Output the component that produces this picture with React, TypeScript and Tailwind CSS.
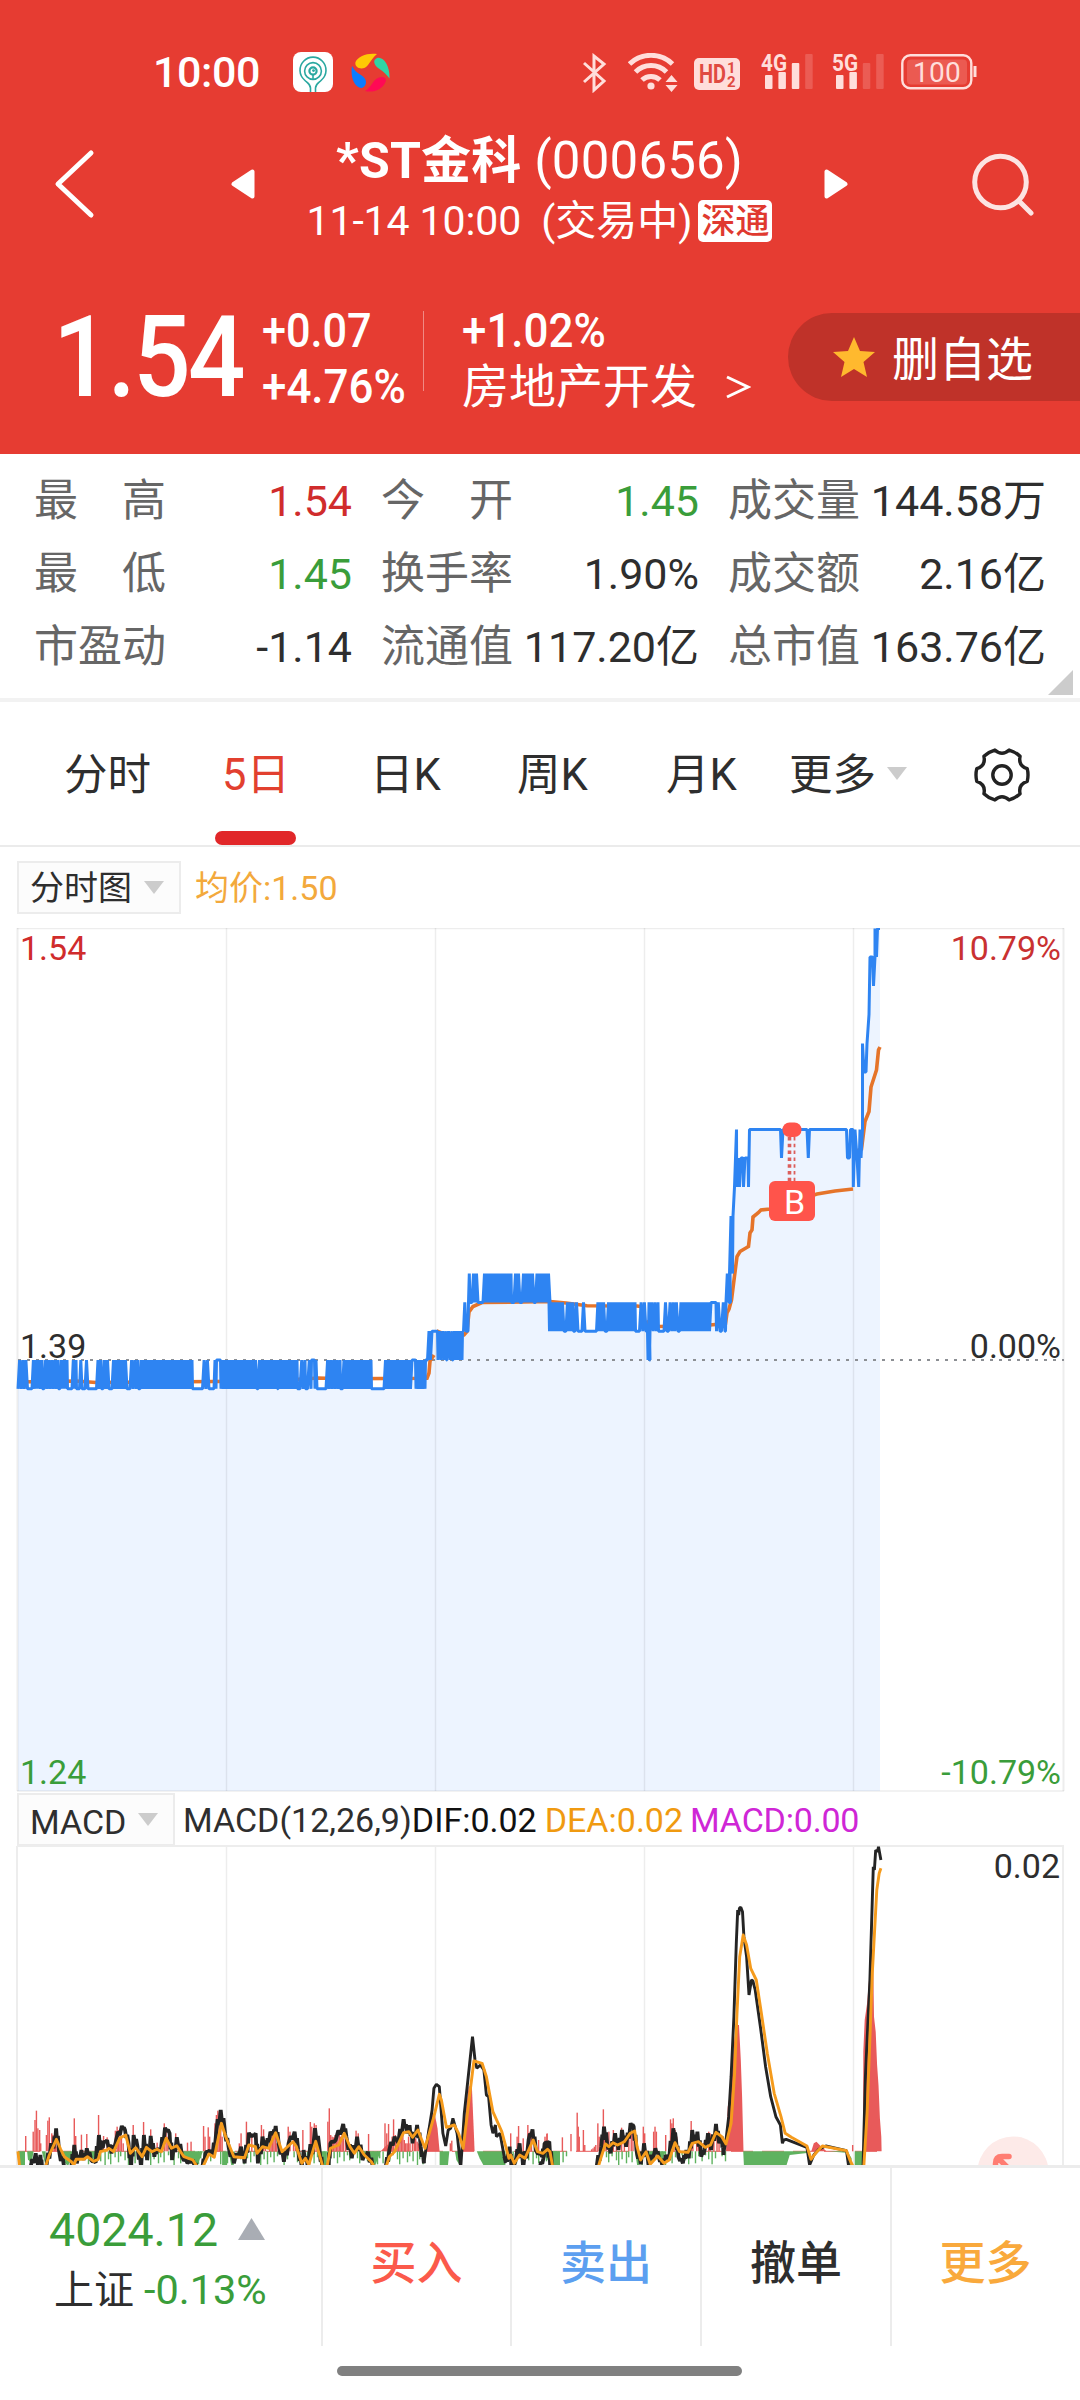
import type { ReactNode } from "react";
import clsx from "clsx";

const VIEW_FONT = "font-['Roboto','Noto_Sans_CJK_SC',sans-serif]";

/* ---------- chart data ---------- */

const STEP = 28.8;
const BASE = 1360;
const level = (cents: number) => BASE - cents * STEP;

// [from, to, low, high] runs where the price flips every tick, low/high in cents from 1.39
const FLIPS: number[][] = [
  [18, 27.5, -1, 0], [32, 42, -1, 0], [44, 58, -1, 0], [60, 67, -1, 0], [72, 76, -1, 0],
  [79.5, 82, -1, 0], [85, 88, -1, 0], [96.5, 101, -1, 0], [103, 109, -1, 0], [112, 127, -1, 0],
  [130, 138, -1, 0], [140, 192, -1, 0], [202.5, 209, -1, 0], [214, 216, -1, 0], [221, 257, -1, 0],
  [258, 277, -1, 0], [278, 297, -1, 0], [300, 305, -1, 0], [307.5, 311, -1, 0], [315, 317, -1, 0],
  [326, 340, -1, 0], [342.5, 371, -1, 0], [384, 412, -1, 0], [416, 425, -1, 0],
  [427.5, 432, 0, 1], [438, 446, 0, 1], [447, 452, 0, 1], [453, 462, 0, 1],
  [463.5, 466, 1, 2], [468.5, 470, 2, 3], [472, 478, 2, 3], [483, 511, 2, 3], [514, 520, 2, 3],
  [522, 534, 2, 3], [535.5, 550, 2, 3],
  [549.5, 564, 1, 2], [566, 573, 1, 2], [575, 578, 1, 2], [582, 585, 1, 2], [596.5, 605, 1, 2],
  [607, 635, 1, 2], [639.5, 646, 1, 2], [648, 650, 0, 2], [650, 658, 1, 2], [664, 667, 1, 2],
  [668.5, 678, 1, 2], [679.5, 711, 1, 2], [716.5, 720, 1, 2], [721.5, 725, 1, 2],
  [726, 730, 2, 3], [729.5, 732.5, 3, 5],
];

const RISE = [
  [733, 1216], [734.5, 1187], [736.5, 1129.5], [736.7, 1187], [738, 1158], [739.5, 1187],
  [741, 1158], [743, 1158], [743.5, 1187], [745, 1158], [748, 1158], [748.5, 1187], [749.5, 1129.5],
  [780.5, 1129.5], [781.5, 1158], [783, 1129.5], [807, 1129.5], [808.3, 1158], [809.5, 1129.5],
  [846.5, 1129.5], [847.5, 1158], [849.5, 1158], [850.5, 1129.5], [853, 1129.5], [853.3, 1187],
  [855, 1129.5], [857, 1158], [858.7, 1187], [860, 1129.5], [861, 1158], [862.5, 1129.5],
  [862.5, 1043.5], [864, 1072], [866, 1072], [867, 1043.5], [869, 1014.5], [870, 957],
  [872.5, 957], [873.5, 986], [875, 957], [875, 928.5], [876.5, 957], [877.5, 928.5], [880, 928.5],
];

function pricePoints() {
  const pts: number[][] = [];
  FLIPS.forEach(([from, to, low, high], i) => {
    const ticks = Math.max(2, Math.round((to - from) / 1.5));
    for (let t = 0; t <= ticks; t++) {
      const x = from + ((to - from) * t) / ticks;
      pts.push([x, level(t % 2 ? high : low)]);
    }
    const next = FLIPS[i + 1];
    if (!next) return;
    // a few quiet minutes hold the upper price instead of the lower one
    const hold = [13, 18, 22, 23, 24, 27, 46].includes(i) ? high : low;
    pts.push([to + 0.5, level(hold)], [next[0] - 0.5, level(hold)]);
  });
  return pts.concat(RISE);
}

const toLine = (pts: number[][]) =>
  pts.map(([x, y], i) => `${i ? "L" : "M"}${x.toFixed(1)} ${y.toFixed(1)}`).join("");

const AVERAGE = [
  "M18 1382L76 1381L96 1382.5L214 1381.5L271 1381L318 1378L341 1378.7L427 1378.3L429 1373L430 1361L434 1355",
  "M436.5 1331L443 1333.5L464 1335L467 1331.5L469 1312L473 1306.5L482 1302.5L550 1301.5L566 1303L587 1305.7L637 1306L644.5 1307",
  "M646 1321L650 1325L660 1326.5L710 1325L725.5 1323.5L727 1313L729 1309L731.5 1300L734.5 1276L737 1256.5L740 1251.5L748.5 1246.5L750 1233L752 1230L753 1217L758 1213L761 1210L770 1209L817 1194L835 1191L853 1189",
  "M855.5 1151.5L861.5 1149L865 1121.5L869 1111.5L871 1087L876.5 1070L878.5 1050L880 1047",
];

// traced on two grids: the left half and the right half of the panel
const left = (list: number[]) => pair(list, (x) => x / 2.8, (y) => 2000 + y / 3);
const right = (list: number[]) => pair(list, (x) => 540 + x / 2.904, (y) => 1830 + y / 3);

function pair(list: number[], fx: (n: number) => number, fy: (n: number) => number) {
  const out: number[][] = [];
  for (let i = 0; i < list.length; i += 2) out.push([fx(list[i]), fy(list[i + 1])]);
  return out;
}

const DEA = [
  left([50, 454, 55, 498]),
  [
    ...left([128, 498, 138, 465, 158, 418, 170, 448, 180, 470, 200, 485, 207, 496, 213, 478, 235, 478, 245, 470, 262, 484, 275, 478, 281, 455, 300, 450, 305, 445, 318, 455, 335, 415, 352, 405, 365, 460, 380, 443, 398, 470, 410, 442, 425, 455, 440, 448, 452, 455, 465, 415, 480, 445, 495, 437, 515, 470, 540, 480, 552, 500, 568, 500, 585, 462, 600, 472, 620, 370, 632, 410, 655, 470, 685, 473, 697, 435, 715, 440, 720, 460, 735, 440, 752, 445, 772, 398, 790, 455, 820, 425, 830, 440, 845, 490, 855, 475, 865, 494, 884, 424, 905, 504, 915, 504, 925, 445, 948, 435, 964, 400, 980, 440, 992, 460, 1005, 440, 1020, 465, 1040, 485, 1050, 504, 1080, 504, 1090, 470, 1105, 455, 1130, 398, 1145, 395, 1155, 412, 1170, 390, 1190, 445, 1215, 350, 1230, 283, 1236, 300, 1250, 382, 1272, 375, 1284, 400, 1297, 445, 1312, 310, 1327, 183, 1350, 190, 1362, 230, 1380, 335, 1405, 395, 1425, 475, 1430, 465, 1440, 490, 1455, 465, 1470, 475, 1485, 438, 1493, 420, 1505, 455, 1520, 460, 1533, 448, 1540, 455, 1548, 504]),
    ...right([168, 1015, 178, 980, 190, 942, 200, 950, 212, 938, 225, 945, 245, 935, 262, 910, 275, 903, 282, 950, 292, 990, 308, 965, 320, 1003, 342, 978, 360, 1000, 375, 990, 392, 938, 405, 965, 430, 967, 442, 940, 460, 935, 480, 952, 495, 945, 511, 907, 528, 920, 540, 942, 555, 880, 565, 730, 572, 550, 580, 380, 590, 315, 600, 345, 612, 415, 628, 450, 640, 530, 660, 670, 680, 790, 700, 860, 712, 910, 730, 922, 775, 948, 787, 988, 800, 970, 820, 948, 890, 962, 900, 990, 912, 1015, 940, 1015, 950, 850, 965, 430, 978, 180, 985, 130, 990, 115]),
  ],
];

const DIF_NOISE = [
  left([85, 504, 100, 460, 106, 495, 113, 465, 118, 504, 130, 500, 143, 430, 150, 445, 157, 385, 165, 450, 180, 504, 200, 504, 208, 435, 215, 490, 228, 450, 235, 480, 243, 445, 255, 480, 268, 488, 277, 405, 284, 450, 290, 430, 300, 420, 312, 460, 325, 420, 341, 378, 350, 390, 360, 430, 367, 504, 374, 405, 385, 440, 395, 504, 403, 405, 412, 480, 422, 408, 432, 470, 440, 445, 450, 455, 462, 383, 475, 400, 482, 480, 495, 412, 510, 470, 525, 490, 540, 480, 552, 508, 567, 500, 575, 460, 587, 450, 595, 470, 605, 400, 618, 330, 630, 400, 640, 440, 655, 490, 675, 440, 685, 490, 697, 398, 705, 410, 716, 400, 722, 490, 735, 410, 745, 445, 757, 395, 765, 405, 772, 378, 780, 430, 795, 485, 808, 430, 825, 395, 835, 450, 845, 504, 850, 450, 862, 504, 882, 385, 895, 450, 903, 508, 920, 500, 925, 430, 940, 420, 961, 372, 970, 410, 985, 475, 1000, 410, 1015, 480, 1030, 455, 1045, 508, 1080, 504, 1090, 450, 1105, 410, 1115, 430, 1130, 358, 1140, 400, 1147, 376, 1155, 430, 1168, 375, 1178, 440, 1187, 490]),
  [
    ...left([1412, 470, 1420, 485, 1427, 440, 1432, 504, 1445, 475, 1455, 430, 1465, 504, 1480, 420, 1491, 388, 1500, 450, 1518, 470, 1525, 430, 1538, 425, 1546, 508]),
    ...right([0, 1010, 10, 985, 22, 935, 30, 1015, 164, 1015, 178, 950, 186, 890, 195, 940, 205, 970, 218, 910, 228, 960, 238, 900, 250, 950, 263, 880, 272, 890, 280, 960, 293, 1003, 302, 940, 315, 1005, 335, 955, 345, 980, 355, 1005, 365, 975, 375, 990, 387, 895, 395, 930, 402, 980, 415, 1000, 425, 960, 432, 985, 442, 900, 450, 940, 457, 905, 468, 980, 478, 960, 488, 910, 497, 960, 511, 882, 520, 940, 528, 920, 533, 975]),
  ],
];

const DIF_PEAKS = [
  left([1187, 490, 1195, 430, 1210, 330, 1215, 265, 1222, 253, 1230, 260, 1240, 400, 1248, 438, 1255, 390, 1262, 385, 1268, 355, 1280, 400, 1290, 504, 1300, 340, 1310, 240, 1323, 110, 1330, 180, 1335, 205, 1345, 195, 1355, 210, 1362, 285, 1368, 290, 1375, 375, 1380, 400, 1387, 375, 1390, 410, 1400, 400, 1415, 490]),
  right([533, 975, 540, 930, 548, 860, 555, 740, 563, 560, 570, 340, 574, 240, 577, 255, 579, 235, 583, 232, 588, 245, 592, 320, 600, 380, 607, 495, 614, 450, 618, 452, 625, 480, 640, 590, 655, 710, 670, 800, 685, 860, 698, 885, 704, 940, 708, 930, 715, 928, 775, 952, 783, 1005, 795, 975, 810, 958, 830, 948, 890, 962, 897, 1015, 938, 1015, 945, 740, 958, 450, 965, 210, 968, 110, 971, 120, 975, 60, 980, 65, 983, 50, 990, 90]),
];

const UP_BARS = [
  ...left([72, 408, 93, 395, 98, 360, 102, 332, 106, 385, 111, 390, 114, 430, 130, 405, 134, 362, 138, 352, 145, 400, 148, 405, 152, 405, 156, 420, 160, 440, 205, 438, 208, 355, 212, 408, 228, 404, 243, 402, 276, 345, 280, 405, 290, 408, 300, 412, 320, 430, 323, 392, 328, 380, 332, 390, 336, 395, 340, 410, 345, 430, 373, 375, 402, 366, 422, 388, 440, 428, 460, 370, 465, 395, 470, 410, 492, 400, 525, 428, 535, 425, 570, 378, 574, 410, 583, 382, 587, 410, 602, 370, 606, 345, 610, 332, 614, 338, 618, 370, 622, 410, 670, 430, 675, 400, 690, 365, 695, 400, 705, 405, 732, 375, 738, 388, 743, 420, 755, 400, 759, 395, 763, 400, 767, 405, 771, 410, 775, 430, 807, 380, 812, 395, 822, 400, 827, 425, 848, 390, 869, 366, 873, 380, 880, 370, 885, 375, 918, 365, 922, 325, 926, 405, 930, 410, 934, 412, 938, 405, 942, 420, 946, 405, 950, 405, 954, 410, 958, 400, 962, 415, 968, 420, 978, 430, 997, 392, 1003, 400, 1032, 402, 1078, 370, 1083, 400, 1088, 372, 1098, 410, 1102, 358, 1107, 405, 1112, 420, 1116, 415, 1120, 415, 1124, 395, 1128, 400, 1132, 420, 1136, 430, 1140, 430, 1144, 410, 1148, 430, 1155, 420, 1160, 415, 1164, 415, 1168, 425, 1172, 430, 1265, 422, 1261, 430, 1430, 400, 1448, 410, 1452, 378, 1465, 415, 1478, 375, 1484, 395, 1488, 410, 1508, 420, 1526, 410, 1532, 400]),
  ...right([20, 912, 65, 922, 90, 912, 108, 848, 111, 890, 114, 920, 126, 900, 130, 945, 150, 958, 154, 955, 158, 950, 162, 945, 168, 880, 172, 920, 184, 838, 188, 890, 192, 915, 200, 905, 213, 900, 222, 930, 237, 893, 245, 930, 258, 905, 265, 905, 270, 900, 300, 890, 304, 910, 330, 905, 334, 890, 338, 905, 365, 915, 379, 868, 383, 880, 387, 865, 392, 900, 397, 920, 439, 873, 444, 905, 455, 920, 460, 930, 475, 940, 490, 905, 494, 910, 505, 930, 514, 910, 520, 930, 908, 945]),
];

const UP_AREAS = [
  left([1066, 454, 1078, 440, 1095, 425, 1098, 454]),
  left([1190, 454, 1198, 385, 1210, 345, 1217, 340, 1225, 385, 1231, 454]),
  left([1296, 454, 1304, 330, 1312, 260, 1321, 255, 1326, 380, 1329, 454]),
  right([540, 964, 545, 830, 555, 780, 563, 640, 570, 585, 578, 585, 583, 690, 587, 800, 591, 964]),
  right([788, 964, 795, 940, 803, 935, 815, 948, 832, 964]),
  right([938, 964, 939, 665, 943, 570, 950, 520, 963, 355, 967, 360, 970, 560, 975, 605, 979, 705, 983, 765, 987, 865, 991, 920, 992, 964]),
];

const DOWN_AREAS = [
  left([50, 454, 70, 454, 70, 498, 52, 498]),
  left([76, 454, 94, 454, 90, 480, 84, 486, 78, 478]),
  left([117, 454, 128, 454, 128, 498]),
  left([165, 454, 204, 454, 204, 470, 190, 498, 170, 475]),
  left([246, 454, 275, 454, 275, 480, 262, 478]),
  left([506, 454, 568, 454, 552, 498, 545, 498]),
  left([622, 454, 636, 454, 636, 498, 622, 498]),
  left([640, 454, 652, 454, 655, 498, 648, 498]),
  left([892, 454, 915, 454, 915, 498, 898, 498]),
  left([1010, 454, 1066, 454, 1050, 498, 1044, 498]),
  left([1231, 454, 1258, 454, 1254, 498, 1231, 498]),
  left([1274, 454, 1294, 454, 1288, 498, 1278, 480]),
  left([1335, 454, 1415, 454, 1415, 498, 1355, 498, 1343, 475]),
  left([1542, 454, 1568, 454, 1568, 498, 1548, 498]),
  right([0, 964, 50, 964, 50, 1005, 35, 1005, 10, 975]),
  right([276, 964, 292, 964, 288, 1005, 282, 1005]),
  right([308, 964, 365, 964, 355, 990, 335, 970, 320, 1005]),
  right([590, 964, 782, 964, 782, 968, 725, 975, 716, 1005, 592, 1005]),
  right([835, 964, 893, 964, 905, 985, 905, 1005, 895, 1005, 888, 968]),
  right([914, 964, 939, 964, 939, 1005, 914, 1005]),
];

// scattered one-minute green bars: x and depth
const DOWN_BARS = Array.from({ length: 180 }, (_, i) => {
  const x = 80 + ((i * 73) % 647) + ((i * 7) % 3) * 0.4;
  return [x, 4 + ((i * 37) % 11)];
}).filter(([x]) => (x < 428 || x > 505) && (x < 568 || x > 602));

function thicken(pts: number[][]) {
  const out: number[][] = [];
  pts.forEach(([x, y], i) => {
    out.push([x, y]);
    const n = pts[i + 1];
    if (!n || n[0] - x > 12) return;
    out.push([x + (n[0] - x) * 0.35, y + (n[1] - y) * 0.6], [x + (n[0] - x) * 0.65, y + (n[1] - y) * 0.35]);
  });
  return out;
}

const GRID_X = [226.5, 435.5, 644.5, 853.5];

/* ---------- status bar ---------- */

function Signal({ label, strong }: { label: string; strong: number }) {
  const tops = [22, 19, 10, 1];
  return (
    <svg width="54" height="46" viewBox="0 -8 54 46" className="-mt-[8px]" fill="#ffdedb">
      <text x="0" y="17.5" fontSize="23" fontWeight="700" textLength="26" lengthAdjust="spacingAndGlyphs">
        {label}
      </text>
      {tops.map((top, i) => (
        <rect key={top} x={4 + i * 13.4} y={top} width="7.5" height={36 - top} rx="1" opacity={i < strong ? 1 : 0.2} />
      ))}
    </svg>
  );
}

function StatusBar() {
  return (
    <div className="flex h-[120px] items-start pt-[53px] text-white">
      <span className="ml-[153px] w-[140px] text-[43px] leading-[38px] font-medium tracking-[-0.4px]">10:00</span>
      <svg width="40" height="40" viewBox="0 0 40 40" className="-mt-px">
        <rect width="40" height="40" rx="8" fill="#fff" />
        <g fill="none" stroke="#2aa8a0" strokeWidth="1.6">
          <path d="M17.5 40v-4c0-4-3-5-6-8a13 13 0 1 1 17 0c-3 3-6 4-6 8v4" />
          <circle cx="20" cy="19" r="8.4" />
          <circle cx="20" cy="19" r="3.6" strokeWidth="2.2" />
          <path d="M20 22v5" />
        </g>
        <circle cx="20.5" cy="18.6" r="1.4" fill="#2aa8a0" />
      </svg>
      <svg width="39" height="39" viewBox="0 0 39 39" className="ml-[18px]">
        <path d="M4.500 9C7 3 17-.5 26 1c-4 3-6 7-9 11-4 6-14 4-12.500-3z" fill="#ffca05" />
        <path d="M26 5c6-2 13 7 12.500 20.500-3-4-6-7-10-9.500-6-4-7-9-2.500-11z" fill="#2fd5a5" />
        <path d="M34.500 29C31 37 22 40 14 38c4-2 6-6 9-10 5-6 14-5 11.500 1z" fill="#ff0a55" />
        <path d="M1 13c2 4 5 7 9 9 7 4 6 11 1 13C4 35-1 25 1 13z" fill="#0a7cff" />
      </svg>
      <svg width="24" height="40" viewBox="0 0 24 40" className="ml-[193px]" fill="none" stroke="#ffdedb" strokeWidth="3">
        <path d="M1 10l20 18-10 9V3l10 8L1 29" />
      </svg>
      <svg width="50" height="40" viewBox="0 0 50 40" className="ml-[21px]" fill="none" stroke="#ffdedb" strokeWidth="5">
        <path d="M1.500 11a31 31 0 0 1 43 0" />
        <path d="M7.500 19a22 22 0 0 1 31 0" />
        <path d="M14 27a13 13 0 0 1 18 0" />
        <circle cx="23" cy="33" r="3.600" fill="#ffdedb" stroke="none" />
        <path d="M37.500 29l6-7 6 7zM37.500 32l6 7 6-7z" fill="#ffdedb" stroke="none" />
      </svg>
      <svg width="46" height="38" viewBox="0 0 46 38" className="ml-[16px]">
        <rect y="5" width="46" height="32" rx="5" fill="#ffdedb" />
        <g fill="#e04a41" fontWeight="700">
          <text x="5" y="30" fontSize="26" textLength="27" lengthAdjust="spacingAndGlyphs">HD</text>
          <text x="33" y="20" fontSize="15">1</text>
          <text x="33" y="33.500" fontSize="15">2</text>
        </g>
      </svg>
      <div className="ml-[21px]"><Signal label="4G" strong={3} /></div>
      <div className="ml-[17px]"><Signal label="5G" strong={2} /></div>
      <svg width="78" height="38" viewBox="0 0 78 38" className="ml-[15px]">
        <rect x="1.300" y="2.300" width="69" height="33" rx="8" fill="none" stroke="#ffdedb" strokeWidth="2.400" />
        <rect x="6" y="6.500" width="60" height="25" rx="4" fill="#eb5a51" />
        <path d="M74 13v11" stroke="#ffdedb" strokeWidth="3" />
        <text x="36" y="28.500" textAnchor="middle" fontSize="28" fill="#ffdedb" letterSpacing="0.3">100</text>
      </svg>
    </div>
  );
}

/* ---------- header ---------- */

function Narrow({ className, children }: { className?: string; children: ReactNode }) {
  return <span className={clsx("block origin-left whitespace-nowrap", className)}>{children}</span>;
}

function Header() {
  return (
    <header className="h-[454px] overflow-hidden bg-[#e63c32] text-white">
      <StatusBar />
      <div className="flex h-[128px] items-center">
        <svg width="42" height="70" viewBox="0 0 42 70" className="ml-[53px]" fill="none" stroke="#fff" strokeWidth="5" strokeLinecap="round" strokeLinejoin="round">
          <path d="M38 4L5 35l33 31" />
        </svg>
        <svg width="24" height="30" viewBox="0 0 24 30" className="ml-[136px]">
          <path d="M21.500 2.500v25L2.500 15z" fill="#fff" stroke="#fff" strokeWidth="4" strokeLinejoin="round" />
        </svg>
        <div className="flex w-[569px] flex-col items-center pt-[7px]">
          <div className="text-[50px] leading-[66px] tracking-[0.2px] whitespace-nowrap">
            <span className="font-bold">*ST金科</span> <span className="text-[51px]">(000656)</span>
          </div>
          <div className="flex items-center text-[41px] leading-[54px] whitespace-nowrap">
            <span className="tracking-[-0.1px]">11-14 10:00</span>
            <span className="ml-[20px]">(交易中)</span>
            <span className="ml-[6px] flex h-[42px] w-[74px] items-center justify-center rounded-[5px] bg-white text-[34px] leading-[40px] font-medium text-[#e0392f]">
              深通
            </span>
          </div>
        </div>
        <svg width="24" height="30" viewBox="0 0 24 30">
          <path d="M2.500 2.500v25L21.500 15z" fill="#fff" stroke="#fff" strokeWidth="4" strokeLinejoin="round" />
        </svg>
        <svg width="64" height="64" viewBox="0 0 64 64" className="ml-[124px]" fill="none" stroke="#fce4e2" strokeWidth="5" strokeLinecap="round">
          <circle cx="28.500" cy="30" r="25.800" />
          <path d="M48 50l11 11" />
        </svg>
      </div>
      <div className="flex h-[206px] items-start pt-[55px]">
        <div className="ml-[53px] w-[209px] pt-[9px]">
          <Narrow className="scale-x-[0.895] text-[113px] leading-[92px] font-medium tracking-[-3px]">1.54</Narrow>
        </div>
        <div className="w-[161px] text-[48px] leading-[56px] font-medium">
          <Narrow className="scale-x-[0.9]">+0.07</Narrow>
          <Narrow className="scale-x-[0.915]">+4.76%</Narrow>
        </div>
        <div className="mt-[8px] h-[80px] w-px bg-[#f08a84]" />
        <div className="ml-[38px] w-[326px] text-[47px] leading-[56px]">
          <Narrow className="scale-x-[0.915] text-[48px] font-medium">+1.02%</Narrow>
          <div className="flex items-center whitespace-nowrap">
            房地产开发
            <svg width="26" height="28" viewBox="0 0 26 28" className="ml-[28px]" fill="none" stroke="#fff" strokeWidth="3">
              <path d="M2 4l21 10L2 24" />
            </svg>
          </div>
        </div>
        <div className="mt-[10px] flex h-[88px] flex-1 items-center rounded-l-[44px] bg-[#bf3229] pl-[44px]">
          <svg width="44" height="42" viewBox="0 0 44 42">
            <path d="M22 1l6 14 15 1-11.500 10 3.500 15-13-8-13 8 3.500-15L1 16l15-1z" fill="#ffb92e" />
          </svg>
          <span className="ml-[16px] pt-[5px] text-[47px] leading-[60px]">删自选</span>
        </div>
      </div>
    </header>
  );
}

/* ---------- quote table ---------- */

type Tone = "up" | "down" | "flat";

const QUOTES: { label: string; value: string; tone: Tone }[] = [
  { label: "最　高", value: "1.54", tone: "up" },
  { label: "今　开", value: "1.45", tone: "down" },
  { label: "成交量", value: "144.58万", tone: "flat" },
  { label: "最　低", value: "1.45", tone: "down" },
  { label: "换手率", value: "1.90%", tone: "flat" },
  { label: "成交额", value: "2.16亿", tone: "flat" },
  { label: "市盈动", value: "-1.14", tone: "flat" },
  { label: "流通值", value: "117.20亿", tone: "flat" },
  { label: "总市值", value: "163.76亿", tone: "flat" },
];

const TONES: Record<Tone, string> = {
  up: "text-[#d02c2c]",
  down: "text-[#3a9d3a]",
  flat: "text-[#2e2e2e]",
};

function QuoteTable() {
  return (
    <section className="relative h-[248px] border-b-4 border-[#f2f2f2] pt-[11px]">
      <div className="ml-[34px] grid w-[1012px] grid-cols-[318px_318px_318px] justify-between text-[43px] leading-[73px]">
        {QUOTES.map((q) => (
          <div key={q.label} className="flex justify-between whitespace-nowrap">
            <span className="text-[44px] text-[#666]">{q.label}</span>
            <span className={TONES[q.tone]}>{q.value}</span>
          </div>
        ))}
      </div>
      <svg width="25" height="25" viewBox="0 0 25 25" className="absolute right-[7px] bottom-[3px]">
        <path d="M25 0v25H0z" fill="#ccc" />
      </svg>
    </section>
  );
}

/* ---------- period tabs ---------- */

function Caret({ className }: { className?: string }) {
  return (
    <svg width="20" height="13" viewBox="0 0 20 13" className={className}>
      <path d="M0 0h20L10 13z" fill="#ccc" />
    </svg>
  );
}

// six blunt teeth, 60 degrees apart, joined by shallow dips
function gearPath() {
  const at = (r: number, deg: number) => {
    const a = (deg * Math.PI) / 180;
    return `${(28 + r * Math.cos(a)).toFixed(2)} ${(28 + r * Math.sin(a)).toFixed(2)}`;
  };
  let d = `M${at(26, -14)}`;
  for (let i = 0; i < 6; i++) {
    const c = i * 60;
    d += `Q${at(26.8, c)} ${at(26, c + 14)}Q${at(18.5, c + 30)} ${at(26, c + 46)}`;
  }
  return `${d}Z`;
}

function Tabs() {
  return (
    <nav className="flex h-[145px] items-center border-b-2 border-[#ebebeb] text-[43.5px] text-[#2e2e2e]">
      <span className="ml-[64px] w-[158px] pt-[5px]">分时</span>
      <span className="relative w-[148px] pt-[5px] text-[#e2402f]">
        5日
        <i className="absolute -bottom-[36px] -left-[7px] h-[14px] w-[81px] rounded-full bg-[#e12729]" />
      </span>
      <span className="w-[147px] pt-[5px]">日K</span>
      <span className="w-[149px] pt-[5px]">周K</span>
      <span className="w-[123px] pt-[5px]">月K</span>
      <span className="pt-[5px]">更多</span>
      <Caret className="ml-[11px]" />
      <svg width="56" height="56" viewBox="0 0 56 56" className="mt-[2px] ml-[67px]" fill="none" stroke="#222" strokeWidth="3.4" strokeLinejoin="round">
        <path d={gearPath()} />
        <circle cx="28" cy="28" r="9.2" />
      </svg>
    </nav>
  );
}

function Picker({ children, className }: { children: ReactNode; className: string }) {
  return (
    <div className={clsx("ml-[17px] flex items-center border-2 border-[#ececec] bg-[#fcfcfc] pl-[11px] text-[#2e2e2e]", className)}>
      {children}
      <Caret className="ml-[12px]" />
    </div>
  );
}

/* ---------- charts ---------- */

function PriceChart() {
  const price = toLine(pricePoints());
  return (
    <svg width="1080" height="865" viewBox="0 928 1080 865" className="block">
      <path d={`${price}L880 1791L18 1791Z`} fill="#edf4ff" />
      <g stroke="#000" strokeOpacity="0.07" strokeWidth="1.5" fill="none">
        <path d="M17 928.500H1064M17 1791H1064" />
        <path d="M17.500 928V1791M1063.500 928V1791" strokeWidth="2" />
        {GRID_X.map((x) => (
          <path key={x} d={`M${x} 928V1791`} />
        ))}
      </g>
      <path d="M18 1360H1064" stroke="#8c8f94" strokeWidth="2" strokeDasharray="3 6" />
      {AVERAGE.map((d) => (
        <path key={d} d={d} fill="none" stroke="#e5742a" strokeWidth="3.6" />
      ))}
      <path d={price} fill="none" stroke="#2e84f2" strokeWidth="3" strokeLinejoin="bevel" />
      <path d="M789.5 1137V1181" stroke="#dc5f5c" strokeWidth="3.6" strokeDasharray="3.5 3.3" />
      <path d="M794.5 1137V1181" stroke="#dc5f5c" strokeWidth="1.8" strokeDasharray="3.5 3.3" />
      <rect x="782.5" y="1122.5" width="19" height="14.5" rx="7" fill="#ff544b" />
      <rect x="769" y="1181" width="46" height="40" rx="6" fill="#ff544b" />
      <text x="794.5" y="1213.5" textAnchor="middle" fontSize="34" fill="#fff">B</text>
      <g fontSize="34">
        <text x="20" y="960" fill="#d02c2c">1.54</text>
        <text x="20" y="1357.5" fill="#2e2e2e">1.39</text>
        <text x="20" y="1783.5" fill="#3a9d3a">1.24</text>
        <g textAnchor="end">
          <text x="1061" y="960" fill="#c93131">10.79%</text>
          <text x="1061" y="1357.5" fill="#2e2e2e">0.00%</text>
          <text x="1061" y="1783.5" fill="#3a9d3a">-10.79%</text>
        </g>
      </g>
    </svg>
  );
}

function MacdChart() {
  return (
    <svg width="1080" height="320" viewBox="0 1845 1080 320" className="block">
      <g stroke="#ededed" strokeWidth="2" fill="none">
        <path d="M17 1846H1064M17 1846V2165M1063 1846V2165" />
        {GRID_X.map((x) => (
          <path key={x} d={`M${x} 1846V2165`} strokeWidth="1.5" />
        ))}
      </g>
      <g fill="#e85a5a">
        {UP_BARS.map(([x, y], i) => (
          <rect key={i} x={x - 0.7} y={y} width="1.4" height={2151.3 - y} />
        ))}
        {UP_AREAS.map((pts, i) => (
          <path key={i} d={toLine(pts)} />
        ))}
      </g>
      <path d="M18 2151.3H880" stroke="#e85a5a" strokeWidth="1" strokeDasharray="22 9" />
      <g fill="#5fb25f">
        {DOWN_BARS.map(([x, depth], i) => (
          <rect key={i} x={x} y={2151.3} width="1.4" height={depth} />
        ))}
        {DOWN_AREAS.map((pts, i) => (
          <path key={i} d={toLine(pts)} />
        ))}
      </g>
      <g fill="none" stroke="#242424" strokeLinejoin="bevel">
        {DIF_NOISE.map((pts, i) => (
          <path key={i} d={toLine(thicken(pts))} strokeWidth="3.8" />
        ))}
        {DIF_PEAKS.map((pts, i) => (
          <path key={i} d={toLine(pts)} strokeWidth="2.9" />
        ))}
      </g>
      {DEA.map((pts, i) => (
        <path key={i} d={toLine(pts)} fill="none" stroke="#f59b1c" strokeWidth="2.9" strokeLinejoin="round" />
      ))}
      <text x="1060" y="1878" textAnchor="end" fontSize="34" fill="#2e2e2e">0.02</text>
      <circle cx="1013" cy="2172" r="35.5" fill="#fdeae8" />
      <path d="M1009 2156.500h-7q-6.500 0-6.500 7v6M999 2159l9 9" fill="none" stroke="#ff7d72" strokeWidth="5.5" strokeLinecap="round" />
    </svg>
  );
}

/* ---------- bottom bar ---------- */

const ACTIONS = [
  { label: "买入", tone: "text-[#fb5a4b]", width: "w-[189px]" },
  { label: "卖出", tone: "text-[#5c9ff0]", width: "w-[190px]" },
  { label: "撤单", tone: "text-[#2e2e2e]", width: "w-[190px]" },
  { label: "更多", tone: "text-[#f9a93c]", width: "w-[189px]" },
];

function BottomBar() {
  return (
    <footer className="h-[235px] border-t-3 border-[#ececec]">
      <div className="flex h-[178px]">
        <div className="w-[321px] pt-[31px] pl-[49px]">
          <div className="flex items-center text-[46.5px] leading-[62px] text-[#3a9d3a]">
            4024.12
            <svg width="27" height="22" viewBox="0 0 27 22" className="-mt-[2px] ml-[20px]">
              <path d="M13.5 0L27 22H0z" fill="#a9adb4" />
            </svg>
          </div>
          <div className="pt-px pl-[5px] text-[40px] leading-[56px] whitespace-nowrap text-[#2e2e2e]">
            上证 <span className="text-[41.5px] text-[#3a9d3a]">-0.13%</span>
          </div>
        </div>
        {ACTIONS.map((a) => (
          <button
            key={a.label}
            className={clsx("border-l-2 border-[#ececec] pt-[12px] text-[46px] font-medium", a.tone, a.width)}
          >
            {a.label}
          </button>
        ))}
      </div>
      <div className="ml-[337px] mt-[20px] h-[10px] w-[405px] rounded-full bg-[#808080]" />
    </footer>
  );
}

export default function App() {
  return (
    <div className={clsx("h-[2400px] w-[1080px] overflow-hidden bg-white", VIEW_FONT)}>
      <Header />
      <QuoteTable />
      <Tabs />
      <div className="flex h-[81px] items-center text-[34px] leading-[40px]">
        <Picker className="h-[53px] w-[164px]">分时图</Picker>
        <span className="ml-[14px] text-[#f3a93c]">均价:1.50</span>
      </div>
      <PriceChart />
      <div className="flex h-[52px] items-center text-[34px] leading-[40px] whitespace-nowrap">
        <Picker className="h-[53px] w-[158px]">
          <span className="pt-[5px]">MACD</span>
        </Picker>
        <span className="ml-[8px] pt-[2px] text-[#2e2e2e]">MACD(12,26,9)</span>
        <span className="pt-[2px] text-[#111]">DIF:0.02</span>
        <span className="ml-[8px] pt-[2px] text-[#f09a10]">DEA:0.02</span>
        <span className="ml-[7px] pt-[2px] tracking-[-0.2px] text-[#cf26d6]">MACD:0.00</span>
      </div>
      <MacdChart />
      <BottomBar />
    </div>
  );
}
